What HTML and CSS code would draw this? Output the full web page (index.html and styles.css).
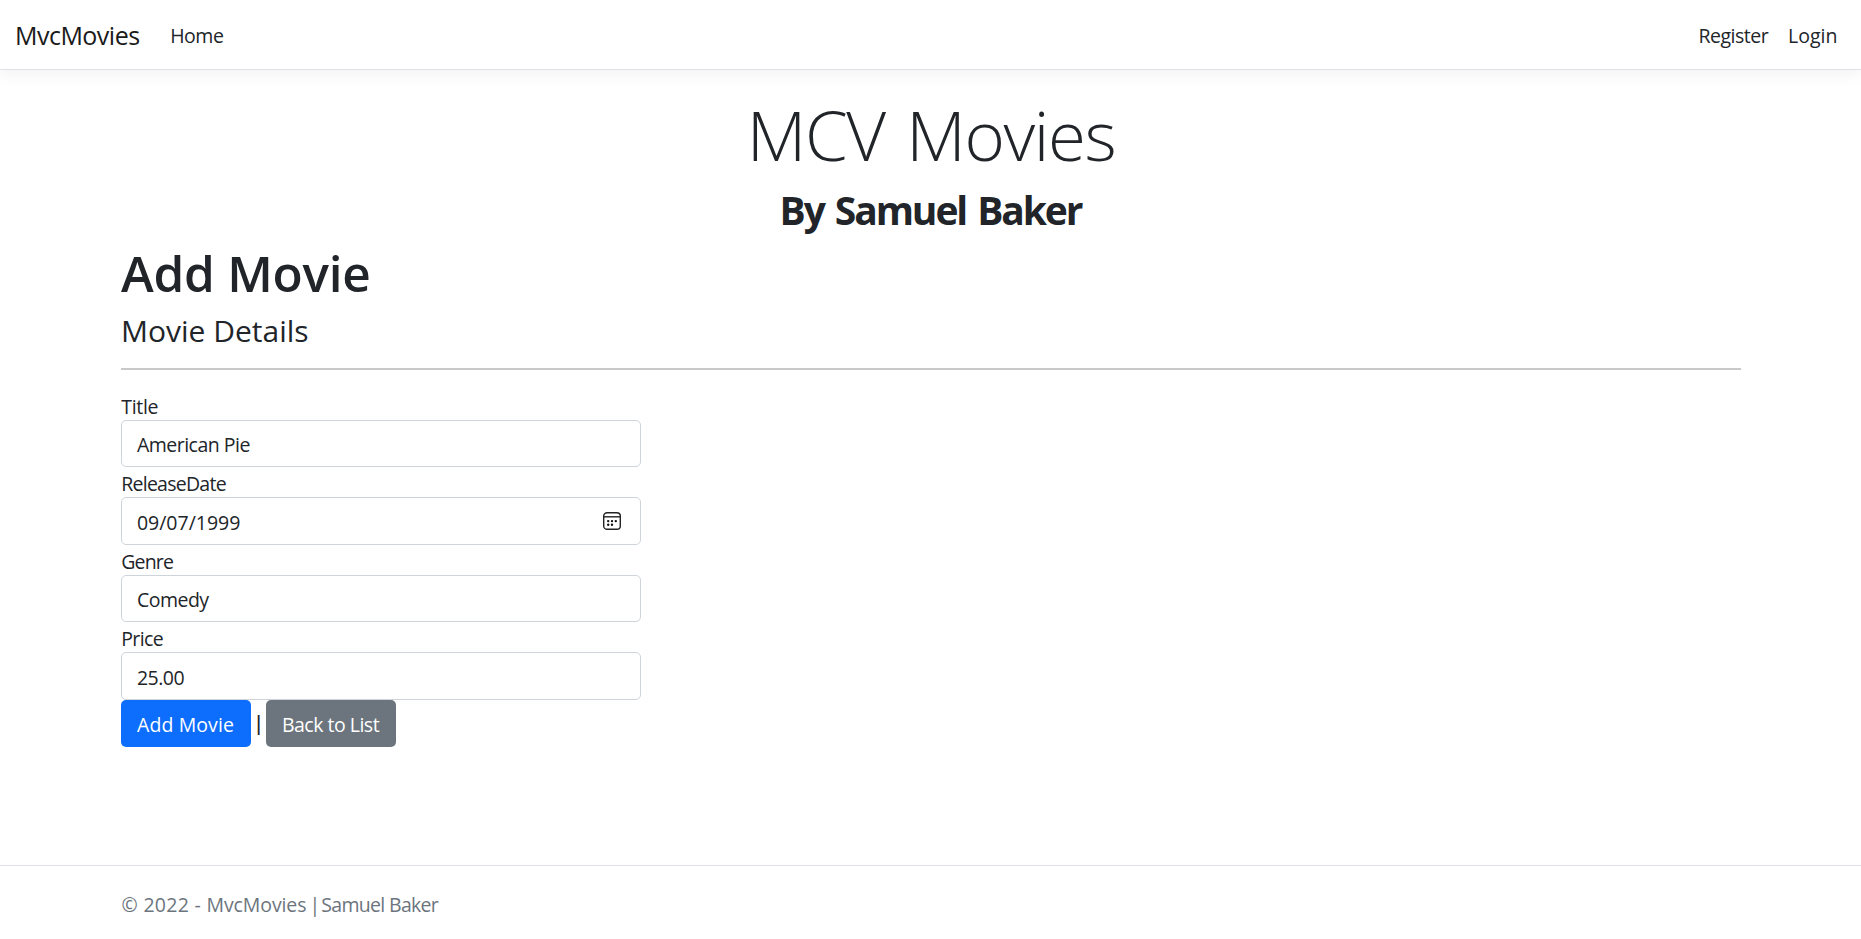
FILE: index.html
```
<!DOCTYPE html>
<html lang="en">
<head>
<meta charset="utf-8">
<title>Add Movie - MvcMovies</title>
<link rel="stylesheet" href="styles.css">
</head>
<body>
<header class="navbar">
  <a class="brand">MvcMovies</a>
  <a class="nav-link t-home">Home</a>
  <nav class="account"><a class="nav-link t-register">Register</a><a class="nav-link t-login">Login</a></nav>
</header>
<main class="container">
  <div class="hero">
    <h1 class="display">MCV Movies</h1>
    <h2 class="author">By Samuel Baker</h2>
  </div>
  <h1 class="page-title">Add Movie</h1>
  <h4 class="section-title">Movie Details</h4>
  <hr class="rule">
  <form class="form">
    <label class="label t-title">Title</label>
    <div class="control">American Pie</div>
    <label class="label t-release">ReleaseDate</label>
    <div class="control t-date">09/07/1999
      <svg class="calendar" viewBox="0 0 20 20" width="20" height="20"><rect x="1.7" y="1.7" width="16.6" height="16.6" rx="3.4" fill="none" stroke="#222" stroke-width="1.4"/><path d="M2 5.8h16" stroke="#222" stroke-width="1.4"/><g fill="#111"><circle cx="6.2" cy="10.1" r="1.2"/><circle cx="10" cy="10.1" r="1.2"/><circle cx="13.8" cy="10.1" r="1.2"/><circle cx="6.2" cy="13.8" r="1.2"/><circle cx="10" cy="13.8" r="1.2"/></g></svg>
    </div>
    <label class="label t-genre">Genre</label>
    <div class="control">Comedy</div>
    <label class="label t-price">Price</label>
    <div class="control t-amount">25.00</div>
    <div class="actions"><button type="button" class="btn primary">Add Movie</button><span class="pipe">|</span><button type="button" class="btn secondary">Back to List</button></div>
  </form>
</main>
<footer class="footer"><div class="footer-inner"><span class="year">© 2022 - </span><span class="site">MvcMovies</span><span class="divider"> | </span><span class="owner">Samuel Baker</span></div></footer>
</body>
</html>
```
FILE: styles.css
```
*{box-sizing:border-box}
html{background:#fff}
body{margin:0;height:939px;display:flex;flex-direction:column;font:400 19.5px/30px "Open Sans","Noto Sans",sans-serif;color:#212529;overflow:hidden}
h1,h2,h4{margin:0}
.navbar{height:70px;flex:none;display:flex;align-items:center;padding:0 13.5px 0 15px;border-bottom:1px solid #dee2e6;box-shadow:0 5px 15px rgba(0,0,0,.05)}
.brand{font-size:25px;letter-spacing:-.52px;margin-right:20.7px;color:#1a1a1a}
.nav-link{padding:3px 10px 0}
.t-home{letter-spacing:-.5px}
.t-register{letter-spacing:-.5px}
.account{margin-left:auto;display:flex}
.container{width:1620px;margin:0 auto;flex:1}
.hero{text-align:center}
.display{font-weight:300;font-size:69px;letter-spacing:-1.4px;word-spacing:5px;line-height:84px;margin-top:22px;padding-left:1px}
.author{font-weight:700;font-size:39px;letter-spacing:-2.1px;word-spacing:3px;line-height:48px;margin-top:10px}
.page-title{font-weight:600;font-size:49.5px;letter-spacing:-.25px;line-height:60px;margin-top:9px;padding-left:.5px}
.section-title{font-weight:500;font-size:30px;line-height:36px;margin-top:10px;padding-left:.5px}
.rule{height:2px;border:0;background:#c8c9ca;margin:19px 0 19.9px}
.form{width:520px;display:flex;flex-direction:column}
.label{display:block;height:30px;line-height:28px;padding:3px 0 0 .7px}
.control{height:47.5px;border:1px solid #ced4da;border-radius:5px;padding:9px 18px 0 15.4px;letter-spacing:-.5px;line-height:30px;display:flex;justify-content:space-between}
.t-date{letter-spacing:0;padding-top:9.7px}
.t-amount{padding-top:9.7px}
.calendar{margin-top:3px}
.t-title{letter-spacing:-.3px}
.t-release{letter-spacing:-.74px}
.t-genre{letter-spacing:-.8px}
.t-price{letter-spacing:-.6px}
.actions{display:flex;align-items:center}
.btn{width:130px;height:47px;border:0;border-radius:5px;padding:3.4px 0 0;color:#fff;font:inherit;background:#0d6efd}
.primary{letter-spacing:.1px}
.secondary{background:#6c757d;letter-spacing:-.5px}
.pipe{width:15px;padding-left:1px;text-align:center;font-weight:600}
.footer{height:74px;border-top:1px solid #dee2e6;color:#6c757d}
.footer-inner{width:1620px;margin:0 auto;line-height:77px;padding-left:1px;white-space:pre}
.year{letter-spacing:.3px}
.site{letter-spacing:-.1px}
.divider{letter-spacing:-2px}
.owner{letter-spacing:-.68px}
```
